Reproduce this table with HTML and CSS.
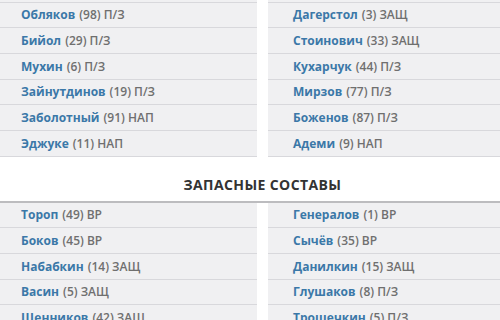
FILE: index.html
```
<!DOCTYPE html>
<html lang="ru">
<head>
<meta charset="utf-8">
<link rel="stylesheet" href="styles.css">
</head>
<body>
<main class="lineups">
  <section class="squad">
    <ul class="team">
      <li class="row"></li>
      <li class="row"><a class="name">Обляков</a> <span class="info">(98) П/З</span></li>
      <li class="row"><a class="name">Бийол</a> <span class="info">(29) П/З</span></li>
      <li class="row"><a class="name">Мухин</a> <span class="info">(6) П/З</span></li>
      <li class="row"><a class="name">Зайнутдинов</a> <span class="info">(19) П/З</span></li>
      <li class="row"><a class="name">Заболотный</a> <span class="info">(91) НАП</span></li>
      <li class="row"><a class="name">Эджуке</a> <span class="info">(11) НАП</span></li>
    </ul>
    <ul class="team">
      <li class="row"></li>
      <li class="row"><a class="name">Дагерстол</a> <span class="info">(3) ЗАЩ</span></li>
      <li class="row"><a class="name">Стоинович</a> <span class="info">(33) ЗАЩ</span></li>
      <li class="row"><a class="name">Кухарчук</a> <span class="info">(44) П/З</span></li>
      <li class="row"><a class="name">Мирзов</a> <span class="info">(77) П/З</span></li>
      <li class="row"><a class="name">Боженов</a> <span class="info">(87) П/З</span></li>
      <li class="row"><a class="name">Адеми</a> <span class="info">(9) НАП</span></li>
    </ul>
  </section>
  <h2 class="title">ЗАПАСНЫЕ СОСТАВЫ</h2>
  <section class="squad bench">
    <ul class="team">
      <li class="row"><a class="name">Тороп</a> <span class="info">(49) ВР</span></li>
      <li class="row"><a class="name">Боков</a> <span class="info">(45) ВР</span></li>
      <li class="row"><a class="name">Набабкин</a> <span class="info">(14) ЗАЩ</span></li>
      <li class="row"><a class="name">Васин</a> <span class="info">(5) ЗАЩ</span></li>
      <li class="row"><a class="name">Щенников</a> <span class="info">(42) ЗАЩ</span></li>
    </ul>
    <ul class="team">
      <li class="row"><a class="name">Генералов</a> <span class="info">(1) ВР</span></li>
      <li class="row"><a class="name">Сычёв</a> <span class="info">(35) ВР</span></li>
      <li class="row"><a class="name">Данилкин</a> <span class="info">(15) ЗАЩ</span></li>
      <li class="row"><a class="name">Глушаков</a> <span class="info">(8) П/З</span></li>
      <li class="row"><a class="name">Трощечкин</a> <span class="info">(5) П/З</span></li>
    </ul>
  </section>
</main>
</body>
</html>
```
FILE: styles.css
```
html, body {
  margin: 0;
  padding: 0;
  background: #ffffff;
  overflow: hidden;
}
body {
  font-family: "Open Sans", "Liberation Sans", sans-serif;
  font-size: 12px;
}
.lineups {
  width: 533px;
  margin: -23px 0 0 -4px;
}
.squad {
  display: grid;
  grid-template-columns: 1fr 1fr;
  column-gap: 11px;
}
.team {
  list-style: none;
  margin: 0;
  padding: 0;
}
.row {
  box-sizing: border-box;
  height: 25.67px;
  display: flex;
  align-items: center;
  gap: 4px;
  padding-left: 25px;
  background: #f0f0f2;
  border-bottom: 1px solid #d8d8dc;
  white-space: nowrap;
}
.name {
  color: #3b78a8;
  font-weight: 700;
}
.info {
  color: #6f6f6f;
  font-weight: 600;
}
.title {
  margin: 0;
  padding: 20px 0 8px;
  line-height: 16px;
  font-size: 14px;
  font-weight: 700;
  color: #333333;
  text-align: center;
  letter-spacing: 0.4px;
}
.bench {
  border-top: 2px solid #bcbcbf;
}
```
